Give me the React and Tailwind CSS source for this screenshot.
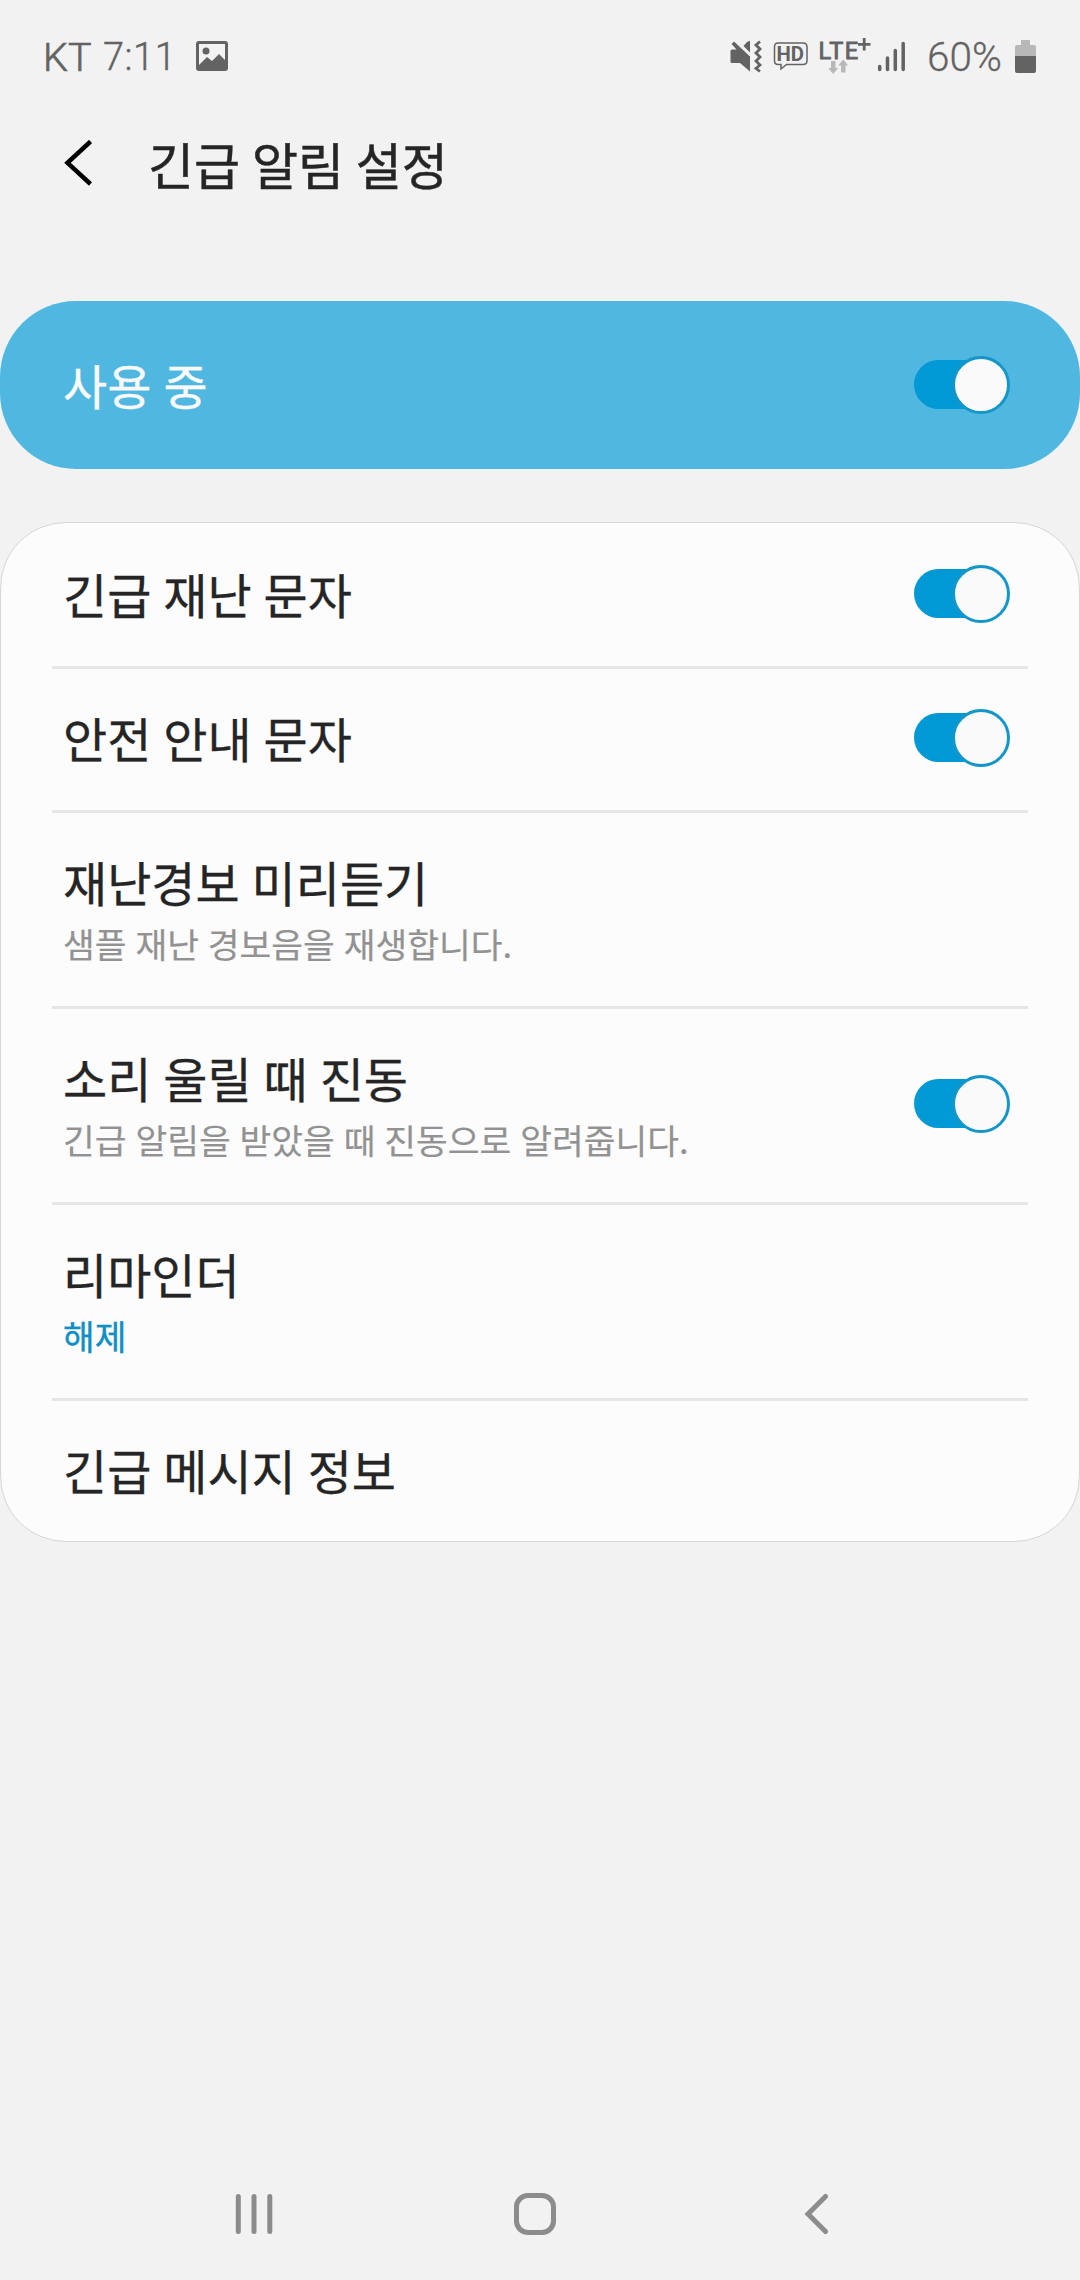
function Toggle() {
  return (
    <div className="flex h-[58px] w-24 shrink-0 items-start pt-1">
      <div className="flex h-[49px] w-full items-start justify-end rounded-full bg-linear-to-r from-[#0099d5] from-60% to-transparent to-60%">
        <div className="-mt-1 size-[58px] shrink-0 rounded-full border-3 border-[#1496c8] bg-[#fafafa]" />
      </div>
    </div>
  );
}

function PictureIcon() {
  return (
    <svg width="32" height="30" viewBox="0 0 32 30">
      <rect x="1.5" y="1.5" width="29" height="27" rx="1.5" fill="none" stroke="#636363" strokeWidth="3" />
      <circle cx="10" cy="10" r="3.5" fill="#636363" />
      <path d="M3 24 11 16l5 4 7-7 6 6v9H3z" fill="#636363" />
    </svg>
  );
}

function MuteIcon() {
  return (
    <svg width="32" height="34" viewBox="730 37 32 34">
      <path d="M730.500 49q0-1.500 1.500-1.500h4.500l-5-5.500 2.500-2.500L750 54.500V69.500L740 61h-8q-1.500 0-1.500-1.500zM743.500 44 747 40l3-1.300v11.800z" fill="#636363" />
      <path d="M760 39.500l-4 3.500 4 4-4 4 4 4-4 4 4 4-4 3.500 4 3" fill="none" stroke="#636363" strokeWidth="2.800" />
    </svg>
  );
}

function HdIcon() {
  return (
    <svg width="35" height="30" viewBox="773 40 35 30">
      <path d="M778 42h25q4 0 4 4v13.500q0 4-4 4h-16.500L781 68v-4.500h-3q-3.500 0-3.500-4V46q0-4 3.500-4z" fill="none" stroke="#636363" strokeWidth="1.500" />
      <text x="776.500" y="60.300" fontSize="20" fontWeight="700" fill="#636363" textLength="27.500" lengthAdjust="spacingAndGlyphs" className="font-[Roboto,sans-serif]">HD</text>
    </svg>
  );
}

function LteIcon() {
  return (
    <svg width="53" height="38" viewBox="818 35 53 38">
      <text x="818.500" y="56.700" fontSize="23.500" fontWeight="400" fill="#636363" stroke="#636363" strokeWidth="0.900" textLength="39.500" lengthAdjust="spacing" className="font-[Roboto,sans-serif]">LTE</text>
      <path d="M858 42.300h12.500M864.200 36v12.500" stroke="#636363" strokeWidth="2.800" />
      <path d="M831 59h4.500v7h2.700l-5 6-5-6h2.800zM841 70.500v-7h-2.800l5-6 5 6h-2.700v7z" fill="#b8b8b8" />
    </svg>
  );
}

function SignalIcon() {
  return (
    <svg width="28" height="31" viewBox="877 40 28 31">
      <path d="M879.700 65.500v3M887.500 57v11.500M895.300 49.500v19M903.200 42.500v26" stroke="#636363" strokeWidth="3.500" strokeLinecap="round" />
    </svg>
  );
}

function BatteryIcon() {
  return (
    <svg width="21" height="33" viewBox="0 0 21 33">
      <path d="M6 0h9v5h4q2 0 2 2v9H0V7q0-2 2-2h4z" fill="#b8b8b8" />
      <path d="M0 16h21v15q0 2-2 2H2q-2 0-2-2z" fill="#636363" />
    </svg>
  );
}

function StatusBar() {
  return (
    <div className="flex h-[112px] items-center justify-between pl-[43px] pr-11 font-[Roboto,sans-serif] text-[#636363]">
      <div className="flex items-center">
        <span className="w-[60px] pt-[3px] text-[39.5px] leading-none font-light [-webkit-text-stroke:0.7px_#636363]">KT</span>
        <span className="w-[93px] pt-0.5 text-[38px] leading-none font-light tracking-[0.5px] [-webkit-text-stroke:0.4px_#636363]">7:11</span>
        <PictureIcon />
      </div>
      <div className="flex items-center">
        <MuteIcon />
        <span className="w-[11px]" />
        <HdIcon />
        <span className="w-2.5" />
        <LteIcon />
        <span className="w-1.5" />
        <SignalIcon />
        <span className="ml-[22px] w-[88px] pt-0.5 text-[40.5px] leading-none font-light [-webkit-text-stroke:0.3px_#636363]">60%</span>
        <BatteryIcon />
      </div>
    </div>
  );
}

function Row({ title, sub, accent, toggle, first }) {
  return (
    <div className={sub ? "h-[196px]" : "h-36"}>
      <div className={first ? "-mb-[3px] h-[3px]" : "mx-[51px] -mb-[3px] h-[3px] bg-[#e6e6e6]"} />
      <div className="flex h-full items-center justify-between pl-[62px] pr-[69px]">
        <div className={sub ? "pt-px" : "pb-[3px]"}>
          <div className="text-[48px] leading-[62px] text-[#252525] [word-spacing:1.2px] [-webkit-text-stroke:0.3px_#252525]">{title}</div>
          {sub && (
            <div
              className={
                accent
                  ? "-mb-px pt-[5px] text-[34.5px] leading-[52px] text-[#0f8fc4] [-webkit-text-stroke:0.4px_#0f8fc4]"
                  : "-mb-px pt-[5px] text-[34.5px] leading-[52px] text-[#929292] [word-spacing:1.2px] [-webkit-text-stroke:0.2px_#929292]"
              }
            >
              {sub}
            </div>
          )}
        </div>
        {toggle && <Toggle />}
      </div>
    </div>
  );
}

const rows = [
  { title: "긴급 재난 문자", toggle: true, first: true },
  { title: "안전 안내 문자", toggle: true },
  { title: "재난경보 미리듣기", sub: "샘플 재난 경보음을 재생합니다." },
  { title: "소리 울릴 때 진동", sub: "긴급 알림을 받았을 때 진동으로 알려줍니다.", toggle: true },
  { title: "리마인더", sub: "해제", accent: true },
  { title: "긴급 메시지 정보" },
];

export default function App() {
  return (
    <div className="flex h-[2280px] w-[1080px] flex-col overflow-hidden bg-[#f2f2f2] font-['Noto_Sans_CJK_KR',sans-serif] whitespace-nowrap">
      <StatusBar />
      <header className="flex h-[189px] items-start pl-16 pt-4">
        <svg className="mt-3" width="28" height="46" viewBox="64 140 28 46">
          <path d="M90.500 141.500 67.500 162.800 90.500 184" fill="none" stroke="#000" strokeWidth="4.500" />
        </svg>
        <h1 className="ml-[56px] text-[50px] leading-[70px] text-[#252525] [word-spacing:0.7px] [-webkit-text-stroke:0.5px_#252525]">긴급 알림 설정</h1>
      </header>
      <section className="flex h-[168px] items-center justify-between rounded-[76px] bg-[#50b8e0] pl-[63px] pr-[70px]">
        <span className="pb-[3px] text-[48px] leading-[62px] text-[#fafafa] [word-spacing:1.5px] [-webkit-text-stroke:0.3px_#fafafa]">사용 중</span>
        <Toggle />
      </section>
      <section className="mt-[53px] h-[1020px] rounded-[66px] border border-[#d6d6d6] bg-[#fcfcfc]">
        <div className="-mt-px">
          {rows.map((r) => (
            <Row key={r.title} {...r} />
          ))}
        </div>
      </section>
      <nav className="mt-auto flex h-[132px] items-center pl-[235px]">
        <svg width="38" height="42" viewBox="235 2193 38 42">
          <path d="M238.300 2196.500v35M254 2196.500v35M269.800 2196.500v35" stroke="#8c8c8c" strokeWidth="5" strokeLinecap="round" />
        </svg>
        <svg className="ml-[241px]" width="42" height="42" viewBox="0 0 42 42">
          <rect x="2.500" y="2.500" width="37" height="37" rx="11.500" fill="none" stroke="#8c8c8c" strokeWidth="5" />
        </svg>
        <svg className="ml-[248px]" width="26" height="42" viewBox="804 2193 26 42">
          <path d="M825.500 2196.500 808 2214l17.500 17.500" fill="none" stroke="#8c8c8c" strokeWidth="5" strokeLinecap="round" />
        </svg>
      </nav>
    </div>
  );
}
